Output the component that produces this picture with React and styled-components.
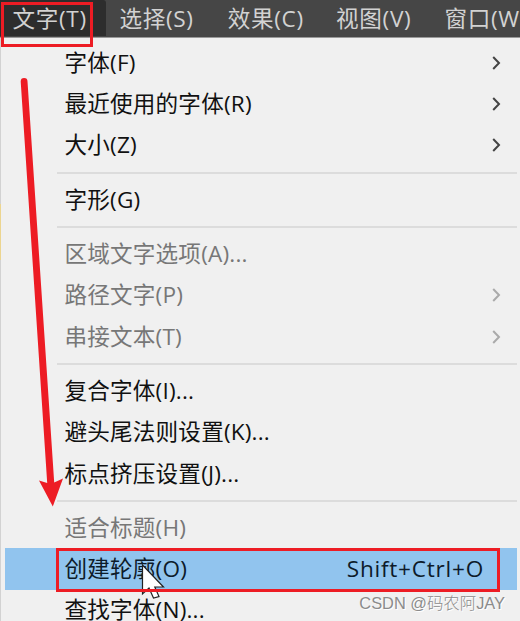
import React from "react";
import styled, { createGlobalStyle } from "styled-components";

const menus = ["文字(T)", "选择(S)", "效果(C)", "视图(V)", "窗口(W)"];

const groups = [
  [
    { label: "字体(F)", sub: true },
    { label: "最近使用的字体(R)", sub: true },
    { label: "大小(Z)", sub: true },
  ],
  [{ label: "字形(G)" }],
  [
    { label: "区域文字选项(A)...", disabled: true },
    { label: "路径文字(P)", disabled: true, sub: true },
    { label: "串接文本(T)", disabled: true, sub: true },
  ],
  [
    { label: "复合字体(I)..." },
    { label: "避头尾法则设置(K)..." },
    { label: "标点挤压设置(J)..." },
  ],
  [
    { label: "适合标题(H)", disabled: true },
    { label: "创建轮廓(O)", shortcut: "Shift+Ctrl+O", active: true },
    { label: "查找字体(N)..." },
  ],
];

const Chevron = ({ disabled }) => (
  <ChevronIcon viewBox="0 0 9 14" $disabled={disabled}>
    <path d="M1.2 1 L7 7 L1.2 13" />
  </ChevronIcon>
);

const MenuItem = ({ label, sub, shortcut, disabled, active }) => (
  <Row $disabled={disabled} $active={active}>
    <Label>{label}</Label>
    {shortcut && <Shortcut>{shortcut}</Shortcut>}
    {sub && <Chevron disabled={disabled} />}
  </Row>
);

const App = () => {
  return (
    <Screen>
      <GlobalStyle />
      <MenuBar>
        {menus.map((name, i) => (
          <MenuTitle key={name} $open={i === 0}>{name}</MenuTitle>
        ))}
      </MenuBar>
      <Dropdown>
        {groups.map((items, i) => (
          <React.Fragment key={i}>
            {i > 0 && <Separator />}
            {items.map((item) => (
              <MenuItem key={item.label} {...item} />
            ))}
          </React.Fragment>
        ))}
      </Dropdown>
      <CanvasEdge />
      <Overlay viewBox="0 0 520 621">
        <path d="M20.7 81.5 A3.4 3.4 0 0 1 27.5 81.5 L54.2 482.5 L63 478.5 L52.8 506.5 L39 480.5 L47.2 483 Z" fill="#ed1c24" />
        <path d="M142.5 565 V594 L149 588 L153.5 598 L159 596.5 L154.8 587 H163.5 Z" fill="#fff" stroke="#222" strokeWidth="1.2" />
      </Overlay>
      <TitleMark />
      <ItemMark />
      <Watermark>CSDN @码农阿JAY</Watermark>
    </Screen>
  );
};

const GlobalStyle = createGlobalStyle`
  body {
    margin: 0;
    overflow: hidden;
  }
  * {
    box-sizing: border-box;
  }
`;

const Screen = styled.div`
  position: relative;
  width: 520px;
  height: 621px;
  overflow: hidden;
  background: #f0f0f0;
  font-family: "Open Sans", "Noto Sans CJK SC", sans-serif;
  font-size: 22.6px;
  white-space: nowrap;
`;

const MenuBar = styled.div`
  display: flex;
  height: 38px;
  background: #464646;
  border-bottom: 1px solid #999;
`;

const MenuTitle = styled.div`
  flex: none;
  width: ${(props) => (props.$open ? 106 : 108.3)}px;
  height: 36px;
  padding-left: ${(props) => (props.$open ? 12.5 : 13.5)}px;
  border-radius: 0 3px 0 0;
  background: ${(props) => (props.$open ? "#2d2d2d" : "transparent")};
  color: #d2d2d2;
  letter-spacing: 0.65px;
  line-height: 38px;
`;

const Dropdown = styled.div`
  display: flex;
  flex-direction: column;
  padding: 4.2px 3px 0 4.5px;
`;

const Row = styled.div`
  display: flex;
  flex: none;
  align-items: center;
  height: 41.3px;
  padding: 0 15px 0 60px;
  background: ${(props) => (props.$active ? "#91c4ee" : "transparent")};
  color: ${(props) => (props.$disabled ? "#777" : props.$active ? "#0d1b2a" : "#111")};
  line-height: 40px;
`;

const Label = styled.span`
  flex: 1;
  letter-spacing: 0.18px;
`;

const Shortcut = styled.span`
  margin-right: 18px;
  letter-spacing: 0.75px;
`;

const ChevronIcon = styled.svg`
  width: 9px;
  height: 14px;
  margin-right: 1px;
  fill: none;
  stroke: ${(props) => (props.$disabled ? "#aaa" : "#444")};
  stroke-width: 2;
`;

const Separator = styled.div`
  flex: none;
  height: 2px;
  margin: 5.5px 0 5.5px 52.5px;
  background: #dcdcdc;
`;

//메뉴 왼쪽으로 보이는 캔버스 가장자리
const CanvasEdge = styled.div`
  position: absolute;
  top: 38px;
  left: 0;
  width: 1px;
  height: 583px;
  background: linear-gradient(#d2d2d2 0 166px, #ecd590 166px 222px, #d2d2d2 222px);
`;

const Mark = styled.div`
  position: absolute;
  border: 3px solid #ed1c24;
`;

const TitleMark = styled(Mark)`
  top: 2px;
  left: 1px;
  width: 92px;
  height: 45px;
`;

const ItemMark = styled(Mark)`
  top: 548px;
  left: 56px;
  width: 444px;
  height: 44px;
`;

const Overlay = styled.svg`
  position: absolute;
  top: 0;
  left: 0;
  width: 520px;
  height: 621px;
`;

const Watermark = styled.div`
  position: absolute;
  right: 15px;
  bottom: 6px;
  color: #8b8b8b;
  font-family: "Liberation Sans", "Noto Sans CJK SC", sans-serif;
  font-size: 16.4px;
  font-weight: 300;
  line-height: 24px;
  text-shadow: 1px 1px 0 #fff;
`;

export default App;
